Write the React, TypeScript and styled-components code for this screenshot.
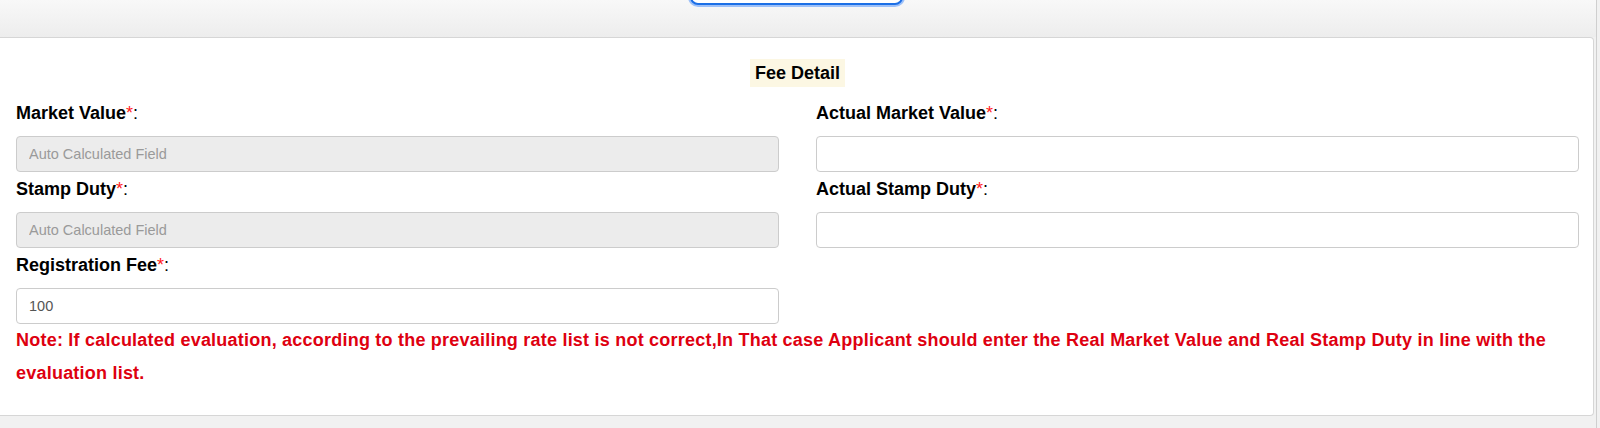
import styled, { createGlobalStyle } from 'styled-components';

const GlobalStyle = createGlobalStyle`
  html, body {
    margin: 0;
    padding: 0;
    background: #f1f1f1;
    font-family: "Liberation Sans", Arial, sans-serif;
  }
`;

const Page = styled.div`
  width: 1596px;
  min-height: 428px;
  border-right: 1px solid #cfcfcf;
  background: #f1f1f1;
`;

const TopBar = styled.div`
  height: 37px;
  display: flex;
  justify-content: center;
  overflow: hidden;
  background: linear-gradient(#f8f8f8, #ededed);
`;

const FocusButton = styled.button`
  width: 213px;
  height: 36px;
  margin-top: -31px;
  margin-right: 3px;
  border: 2px solid #1c6fe6;
  border-radius: 8px;
  background: #ffffff;
  box-shadow: 0 0 0 2px rgba(120, 170, 250, 0.7);
`;

const Card = styled.section`
  margin-right: 2px;
  padding: 21px 14px 25px 16px;
  background: #ffffff;
  border: 1px solid #d6d6d6;
  border-left: 0;
  border-radius: 0 4px 4px 0;
`;

const HeadingRow = styled.div`
  display: flex;
  justify-content: center;
  margin-bottom: 9px;
`;

const Heading = styled.h3`
  margin: 0;
  padding: 0 5px;
  font-size: 18px;
  line-height: 28px;
  font-weight: bold;
  color: #000;
  background: #fcf7e3;
`;

const FieldGrid = styled.div`
  display: grid;
  grid-template-columns: 1fr 1fr;
  column-gap: 37px;
`;

const Field = styled.div`
  display: flex;
  flex-direction: column;
`;

const Label = styled.label`
  margin: 6px 0 12px;
  font-size: 18px;
  line-height: 22px;
  font-weight: bold;
  color: #000;
`;

const Star = styled.span`
  color: #ff1a1a;
  font-weight: normal;
`;

const Colon = styled.span`
  font-weight: normal;
`;

const Input = styled.input<{ $auto?: boolean }>`
  box-sizing: border-box;
  height: 36px;
  width: 100%;
  padding: 0 12px;
  border: 1px solid #cccccc;
  border-radius: 4px;
  font-family: "Liberation Sans", Arial, sans-serif;
  font-size: 14.5px;
  color: #555555;
  background: ${(p) => (p.$auto ? '#ececec' : '#ffffff')};
  outline: none;

  &::placeholder {
    color: #9a9a9a;
  }
`;

const Note = styled.p`
  margin: 0;
  font-size: 18px;
  line-height: 33px;
  font-weight: bold;
  letter-spacing: 0.22px;
  color: #de0010;
`;

type FieldType = {
  label: string;
  auto?: boolean;
  value?: string;
};

const fields: FieldType[] = [
  { label: 'Market Value', auto: true },
  { label: 'Actual Market Value' },
  { label: 'Stamp Duty', auto: true },
  { label: 'Actual Stamp Duty' },
  { label: 'Registration Fee', value: '100' },
];

export default function App() {
  return (
    <>
      <GlobalStyle />
      <Page>
        <TopBar>
          <FocusButton type="button" />
        </TopBar>
        <Card>
          <HeadingRow>
            <Heading>Fee Detail</Heading>
          </HeadingRow>
          <FieldGrid>
            {fields.map((f, key) => (
              <Field key={key}>
                <Label>
                  {f.label}
                  <Star>*</Star>
                  <Colon>:</Colon>
                </Label>
                <Input
                  $auto={f.auto}
                  readOnly={f.auto}
                  placeholder={f.auto ? 'Auto Calculated Field' : ''}
                  defaultValue={f.value}
                />
              </Field>
            ))}
          </FieldGrid>
          <Note>
            Note: If calculated evaluation, according to the prevailing rate list is not correct,In That case Applicant
            should enter the Real Market Value and Real Stamp Duty in line with the evaluation list.
          </Note>
        </Card>
      </Page>
    </>
  );
}
